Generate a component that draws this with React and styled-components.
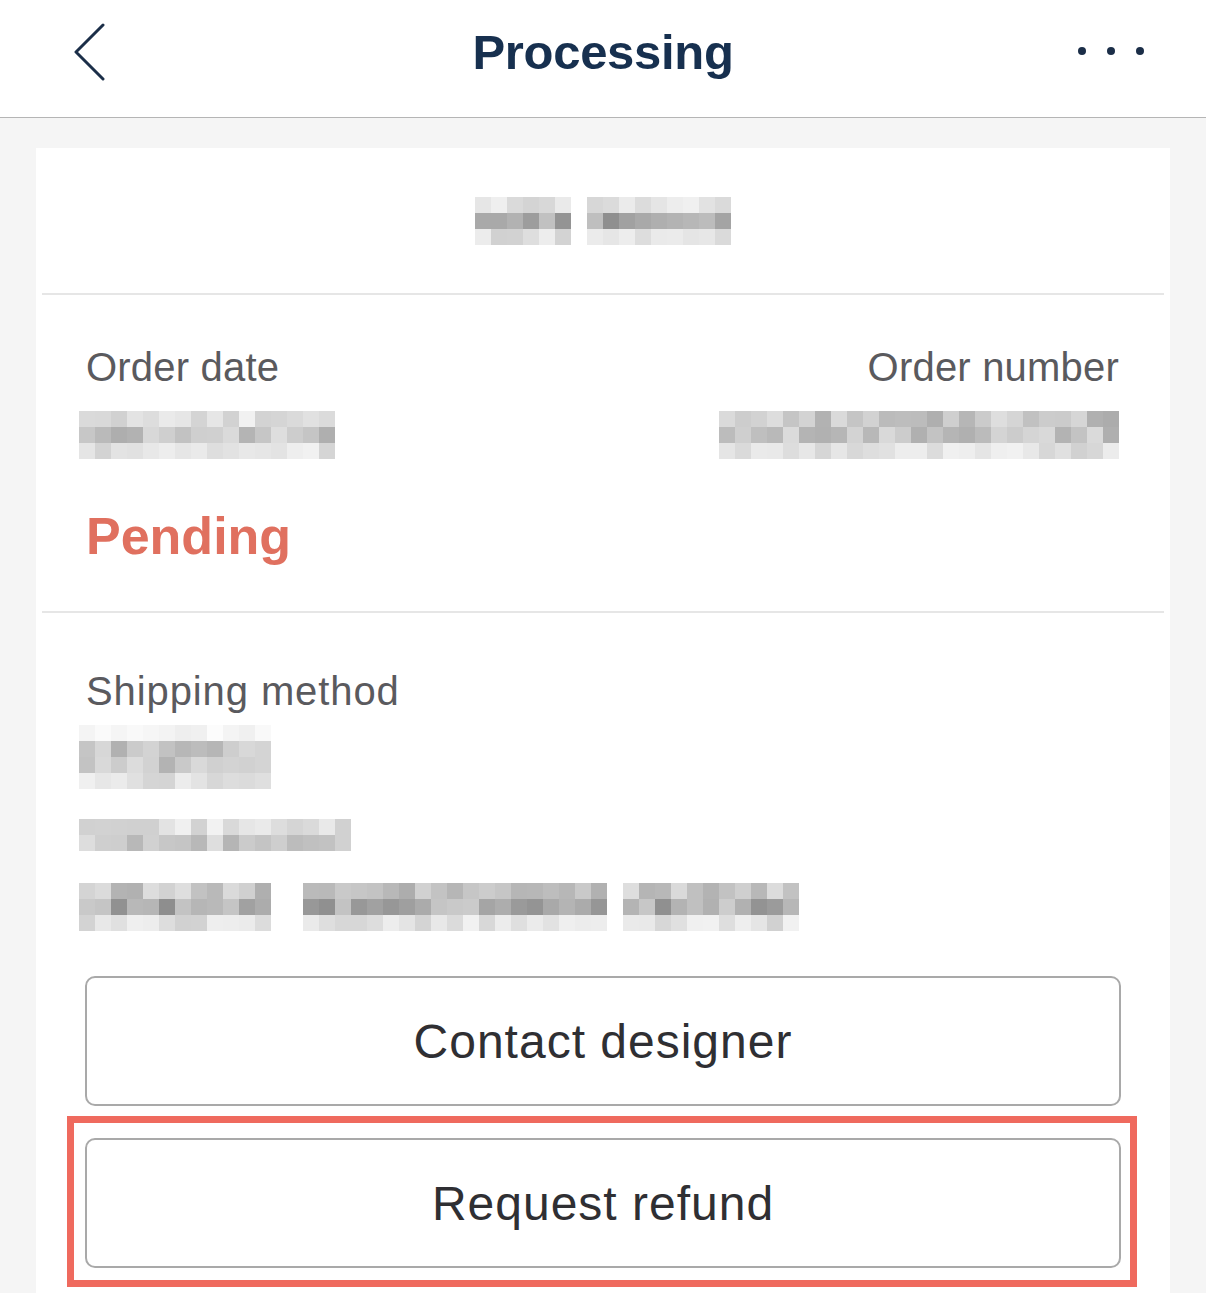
import styled, { createGlobalStyle } from "styled-components";

// small seeded generator so the pixelated placeholders look the same every render
const makeRand = (seed) => {
	let s = seed;
	return () => {
		s = (s * 9301 + 49297) % 233280;
		return s / 233280;
	};
};

const TONES = {
	f: [238, 252], // faint
	l: [208, 242], // light
	m: [172, 222], // mid
	d: [140, 205], // dark
};

const buildGrid = ({ cols, rows, seed, gaps = [] }) => {
	const rnd = makeRand(seed);
	return rows.map((tone) =>
		Array.from({ length: cols }, (_, c) => {
			if (gaps.includes(c)) return 255;
			const [lo, hi] = TONES[tone];
			return Math.round(lo + rnd() * (hi - lo));
		})
	);
};

const BLURS = {
	title: { cols: 16, rows: ["l", "d", "l"], seed: 11, gaps: [6] },
	date: { cols: 16, rows: ["l", "m", "l"], seed: 27 },
	number: { cols: 25, rows: ["m", "m", "l"], seed: 43 },
	carrier: { cols: 12, rows: ["f", "m", "m", "l"], seed: 5 },
	name: { cols: 17, rows: ["l", "m"], seed: 71 },
	address: { cols: 45, rows: ["m", "d", "l"], seed: 90, gaps: [12, 13, 33] },
};

const Mosaic = ({ kind, $offset }) => {
	const grid = buildGrid(BLURS[kind]);
	return (
		<MosaicGrid $cols={BLURS[kind].cols} $offset={$offset}>
			{grid.flat().map((v, i) => (
				<Cell key={i} $v={v} />
			))}
		</MosaicGrid>
	);
};

const App = () => {
	return (
		<>
			<GlobalStyle />
			<Header>
				<BackButton aria-label="Back">
					<svg width="36" height="58" viewBox="0 0 36 58" fill="none">
						<path
							d="M31 2 L4 29 L31 56"
							stroke="#1b2e48"
							strokeWidth="3"
							strokeLinecap="round"
							strokeLinejoin="round"
						/>
					</svg>
				</BackButton>
				<Title>Processing</Title>
				<MoreButton aria-label="More">
					<Dot />
					<Dot />
					<Dot />
				</MoreButton>
			</Header>

			<Page>
				<Card>
					<DesignerRow>
						<Mosaic kind="title" />
					</DesignerRow>
					<Divider />

					<Section $top={48} $bottom={45}>
						<MetaRow>
							<MetaCol>
								<Label>Order date</Label>
								<Mosaic kind="date" $offset={-7} />
							</MetaCol>
							<MetaCol $right>
								<Label>Order number</Label>
								<Mosaic kind="number" />
							</MetaCol>
						</MetaRow>
						<Status>Pending</Status>
					</Section>
					<Divider />

					<Section $top={54} $bottom={0}>
						<Label $wide>Shipping method</Label>
						<Stack>
							<Mosaic kind="carrier" $offset={-7} />
							<Mosaic kind="name" $offset={-7} />
							<Mosaic kind="address" $offset={-7} />
						</Stack>
					</Section>

					<Actions>
						<ActionButton>Contact designer</ActionButton>
						<Highlight>
							<ActionButton>Request refund</ActionButton>
						</Highlight>
					</Actions>
				</Card>
			</Page>
		</>
	);
};

export default App;

const GlobalStyle = createGlobalStyle`
	body {
		margin: 0;
		background: #f5f5f5;
		font-family: "Liberation Sans", Arial, sans-serif;
	}
`;

const Header = styled.header`
	display: grid;
	grid-template-columns: 1fr auto 1fr;
	align-items: center;
	height: 117px;
	padding: 0 62px;
	background: #fff;
	border-bottom: 1px solid #b5b5b5;
	box-sizing: content-box;
`;

const BackButton = styled.button`
	justify-self: start;
	display: flex;
	padding: 0;
	margin: -14px 0 0 10px;
	background: none;
	border: none;
	cursor: pointer;
`;

const Title = styled.h1`
	margin: -14px 0 0;
	font-size: 49px;
	font-weight: 700;
	color: #17304f;
	letter-spacing: -0.3px;
`;

const MoreButton = styled.button`
	justify-self: end;
	display: flex;
	gap: 21px;
	padding: 0;
	margin-top: -16px;
	background: none;
	border: none;
	cursor: pointer;
`;

const Dot = styled.span`
	width: 8px;
	height: 8px;
	border-radius: 50%;
	background: #1b2e48;
`;

const Page = styled.main`
	padding: 30px 36px 0;
`;

const Card = styled.div`
	min-height: 1145px;
	background: #fff;
`;

const DesignerRow = styled.div`
	display: flex;
	justify-content: center;
	align-items: center;
	height: 145px;
`;

const Divider = styled.div`
	height: 2px;
	margin: 0 6px;
	background: #e6e6e6;
`;

const Section = styled.section`
	padding: ${({ $top }) => $top}px 51px ${({ $bottom }) => $bottom}px 50px;
`;

const MetaRow = styled.div`
	display: flex;
	justify-content: space-between;
`;

const MetaCol = styled.div`
	display: flex;
	flex-direction: column;
	align-items: ${({ $right }) => ($right ? "flex-end" : "flex-start")};
	gap: 20px;
`;

const Label = styled.div`
	font-size: 40px;
	line-height: 48px;
	color: #5a5a5e;
	letter-spacing: ${({ $wide }) => ($wide ? "0.9px" : "0.2px")};
`;

const Status = styled.div`
	margin-top: 47px;
	font-size: 52px;
	line-height: 60px;
	font-weight: 700;
	color: #e0705f;
`;

const Stack = styled.div`
	display: flex;
	flex-direction: column;
	align-items: flex-start;
	gap: 30px;
	margin-top: 10px;

	& > :last-child {
		margin-top: 2px;
	}
`;

const MosaicGrid = styled.div`
	display: grid;
	grid-template-columns: repeat(${({ $cols }) => $cols}, 16px);
	grid-auto-rows: 16px;
	margin-left: ${({ $offset }) => $offset || 0}px;
	filter: blur(0.6px);
`;

const Cell = styled.span.attrs(({ $v }) => ({
	style: { background: `rgb(${$v}, ${$v}, ${$v})` },
}))``;

const Actions = styled.div`
	display: flex;
	flex-direction: column;
	gap: 10px;
	padding: 45px 49px 6px;
`;

const ActionButton = styled.button`
	width: 100%;
	height: 130px;
	background: #fff;
	border: 2px solid #a9a9a9;
	border-radius: 10px;
	font-family: "Liberation Sans", Arial, sans-serif;
	font-size: 48px;
	letter-spacing: 1px;
	color: #2f2f33;
	cursor: pointer;
`;

const Highlight = styled.div`
	margin: 0 -16px 0 -18px;
	padding: 15px 9px 12px 11px;
	border: 7px solid #ef6a5e;
`;
